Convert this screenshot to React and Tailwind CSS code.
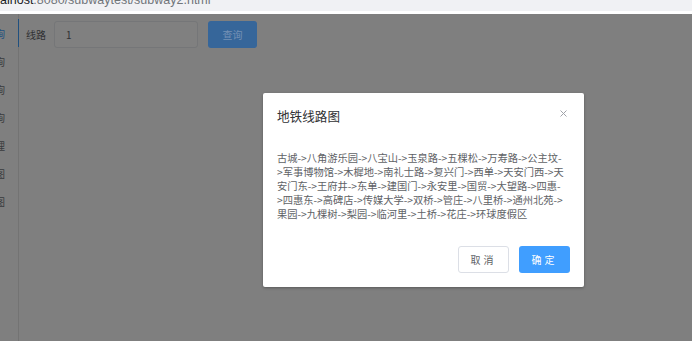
import React from 'react';

const menu = [
  { label: '路线查询', active: true },
  { label: '站点查询' },
  { label: '换乘查询' },
  { label: '票价查询' },
  { label: '线路管理' },
  { label: '线路图' },
  { label: '站点图' },
];

const route = [
  '古城->八角游乐园->八宝山->玉泉路->五棵松->万寿路->公主坟-',
  '>军事博物馆->木樨地->南礼士路->复兴门->西单->天安门西->天',
  '安门东->王府井->东单->建国门->永安里->国贸->大望路->四惠-',
  '>四惠东->高碑店->传媒大学->双桥->管庄->八里桥->通州北苑->',
  '果园->九棵树->梨园->临河里->土桥->花庄->环球度假区',
];

export default function App() {
  return (
    <div className="relative w-[692px] h-[341px] overflow-hidden font-['Microsoft_YaHei','Noto_Sans_CJK_SC',sans-serif]">
      {/* browser address bar, cut at the top */}
      <div className="h-[11px] bg-[#f0f1f4] overflow-hidden">
        <div className="-mt-[8px] text-[12.5px] leading-[16px] whitespace-nowrap font-['Liberation_Sans','Noto_Sans',sans-serif]">
          <span className="text-[#202124]">alhost</span>
          <span className="text-[#70757a]">:8080/subwaytest/subway2.html</span>
        </div>
      </div>
      <div className="h-[3px] bg-white" />

      {/* page, dimmed by the dialog mask */}
      <div className="flex h-[327px] bg-[#7f7f7f]">
        <div className="w-[19px] shrink-0 border-r border-[#737373] pt-[5px]">
          {menu.map((m) => (
            <div
              key={m.label}
              className={
                m.active
                  ? 'flex h-[28px] items-center justify-end overflow-hidden whitespace-nowrap pr-[13px] text-[10px] text-[#20507f] -mr-px border-r border-[#20507f]'
                  : 'flex h-[28px] items-center justify-end overflow-hidden whitespace-nowrap pr-[13px] text-[10px] text-[#3a3b3d]'
              }
            >
              {m.label}
            </div>
          ))}
        </div>

        <div className="flex-1 pl-[7px] pt-[7px]">
          <div className="flex items-center">
            <span className="w-[27px] text-[10px] text-[#303133]">线路</span>
            <div className="ml-[1px] flex h-[27px] w-[144px] items-center rounded-[3px] border border-[#757678] bg-[#808080] pl-[11px] text-[10px] text-[#303133]">
              1
            </div>
            <button className="ml-[10px] h-[27px] w-[49px] rounded-[3px] bg-[#36669a] text-[10px] text-[#7591b5]">
              查询
            </button>
          </div>
        </div>
      </div>

      {/* dialog */}
      <div className="absolute left-[263px] top-[93px] w-[321px] rounded-[2px] bg-white shadow-[0_1px_3px_rgba(0,0,0,0.3)]">
        <div className="px-[14px] pt-[14px] pb-[7px]">
          <div className="text-[12.6px] leading-[17px] text-[#303133]">地铁线路图</div>
        </div>
        <svg
          className="absolute right-[17px] top-[17px]"
          width="7"
          height="7"
          viewBox="0 0 7 7"
        >
          <path d="M0.5 0.5L6.5 6.5M6.5 0.5L0.5 6.5" stroke="#a0a3a9" strokeWidth="1" />
        </svg>
        <div className="px-[14px] pt-[20px] pb-[18px] text-[10.25px] leading-[14px] text-[#606266]">
          {route.map((l) => (
            <div key={l} className="whitespace-nowrap">{l}</div>
          ))}
        </div>
        <div className="flex justify-end gap-[10px] px-[14px] pt-[7px] pb-[14px]">
          <button className="h-[27px] w-[51px] rounded-[3px] border border-[#dcdfe6] bg-white text-[10px] tracking-[3px] text-[#606266]">
            取消
          </button>
          <button className="h-[27px] w-[51px] rounded-[3px] bg-[#409eff] text-[10px] tracking-[3px] text-white">
            确定
          </button>
        </div>
      </div>
    </div>
  );
}
